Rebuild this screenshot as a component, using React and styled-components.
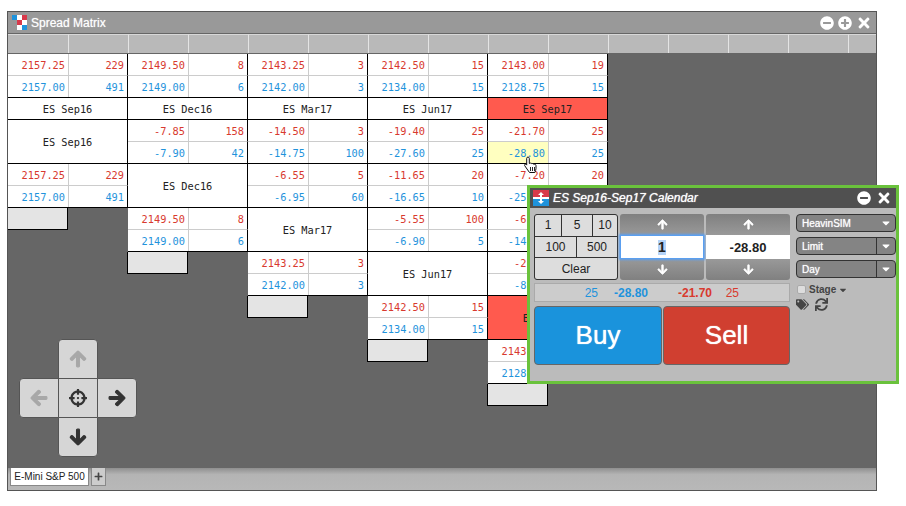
import React from "react";
import styled, { createGlobalStyle } from "styled-components";
import {
  FaArrowUp,
  FaArrowDown,
  FaArrowLeft,
  FaArrowRight,
  FaCrosshairs,
  FaTags,
  FaSync,
  FaMinusCircle,
  FaPlusCircle,
  FaTimes,
  FaPlus,
  FaCaretDown,
} from "react-icons/fa";

const RED = "#d8392e";
const BLUE = "#1f93dc";

const GlobalStyle = createGlobalStyle`
  html, body { margin: 0; padding: 0; background: #fff; }
  body { font-family: "Liberation Sans", Arial, sans-serif; }
  * { box-sizing: border-box; }
`;

const Page = styled.div`
  position: relative;
  width: 906px;
  height: 506px;
  padding: 11px 0 0 7px;
  overflow: hidden;
`;

const Win = styled.div`
  width: 870px;
  height: 480px;
  border: 1px solid #555;
  display: flex;
  flex-direction: column;
`;

const TitleBar = styled.div`
  height: 21px;
  flex: none;
  background: #999;
  display: flex;
  align-items: center;
  padding: 0 4px 0 4px;
  gap: 4px;
`;

const Title = styled.span`
  color: #fff;
  font-size: 12px;
  flex: 1;
  text-shadow: 0 0 1px #ddd;
`;

const WinIcons = styled.span`
  display: flex;
  align-items: center;
  gap: ${(p) => p.$gap || 4}px;
  color: #fff;
  font-size: 14px;
`;

const CloseIcon = styled(FaTimes)`
  font-size: 16px;
`;

const HeaderRow = styled.div`
  height: 21px;
  flex: none;
  display: flex;
  overflow: hidden;
  background: #b9b9b9;
  border-top: 1px solid #666;
  border-bottom: 1px solid #666;
`;

const HeaderCell = styled.div`
  width: 60px;
  flex: none;
  border-top: 1px solid #d8d8d8;
  border-left: 1px solid #e4e4e4;
  &:first-child {
    border-left: none;
  }
`;

const Main = styled.div`
  flex: 1;
  position: relative;
  background: #666;
  display: flex;
  align-items: flex-start;
  overflow: hidden;
`;

const Column = styled.div`
  width: 120px;
  flex: none;
  display: flex;
  flex-direction: column;
  font-family: "DejaVu Sans Mono", "Liberation Mono", monospace;
  font-size: 10.3px;
`;

const Row = styled.div`
  height: 22px;
  display: flex;
  background: #fff;
  border-right: 1px solid #000;
  border-bottom: 1px solid ${(p) => (p.$last ? "#000" : "#ccc")};
`;

const Cell = styled.div`
  width: ${(p) => (p.$qty ? 59 : 60)}px;
  display: flex;
  align-items: center;
  justify-content: flex-end;
  padding-right: 3px;
  color: ${(p) => (p.$side === "bid" ? BLUE : RED)};
  background: ${(p) => (p.$hot ? "#ffffc0" : "transparent")};
  border-left: ${(p) => (p.$qty ? "1px solid #ccc" : "none")};
`;

const Label = styled.div`
  height: ${(p) => (p.$tall ? 44 : 22)}px;
  display: flex;
  align-items: center;
  justify-content: center;
  color: #222;
  background: ${(p) => (p.$active ? "#ff5a4e" : "#fff")};
  border-right: 1px solid #000;
  border-bottom: 1px solid #000;
`;

const Stub = styled.div`
  width: 60px;
  height: 22px;
  background: #e4e4e4;
  border-right: 1px solid #000;
  border-bottom: 1px solid #000;
  box-shadow: -1px 0 0 #000;
`;

const Dpad = styled.div`
  position: absolute;
  left: 11px;
  top: 285px;
  display: grid;
  grid-template-columns: repeat(3, 39px);
  grid-template-rows: repeat(3, 39px);
`;

const PadBtn = styled.div`
  grid-column: ${(p) => p.$col};
  grid-row: ${(p) => p.$row};
  display: flex;
  align-items: center;
  justify-content: center;
  background: #d6d6d6;
  border: 1px solid #555;
  margin: 0 -1px -1px 0;
  border-radius: ${(p) => p.$radius || "0"};
  color: ${(p) => (p.$off ? "#a8a8a8" : "#333")};
  font-size: 18px;
  svg {
    stroke: currentColor;
    stroke-width: ${(p) => (p.$thin ? 0 : 36)};
  }
`;

const TabBar = styled.div`
  height: 22px;
  flex: none;
  background: linear-gradient(#8f8f8f, #b4b4b4 30%, #b8b8b8);
  display: flex;
  align-items: flex-start;
  padding-left: 2px;
  gap: 2px;
`;

const Tab = styled.div`
  height: 18px;
  width: 79px;
  background: #fff;
  border: 1px solid #888;
  border-top: none;
  font-size: 10px;
  color: #222;
  display: flex;
  align-items: center;
  justify-content: center;
  white-space: nowrap;
`;

const AddTab = styled.div`
  width: 15px;
  height: 18px;
  background: #ccc;
  border: 1px solid #888;
  border-top: none;
  color: #444;
  font-size: 9px;
  display: flex;
  align-items: center;
  justify-content: center;
`;

const Pointer = styled.svg`
  position: absolute;
  left: 523px;
  top: 156px;
`;

const Popup = styled.div`
  position: absolute;
  left: 527px;
  top: 185px;
  width: 372px;
  height: 199px;
  border: 3px solid #6ac23c;
  background: #bbb;
  display: flex;
  flex-direction: column;
`;

const PopupTitle = styled.div`
  height: 20px;
  flex: none;
  background: #505050;
  display: flex;
  align-items: center;
  padding: 0 4px 0 3px;
  gap: 4px;
`;

const PopupName = styled.span`
  flex: 1;
  color: #fff;
  font-size: 12px;
  font-style: italic;
  text-shadow: 0 0 1px #eee;
`;

const PopupBody = styled.div`
  padding: 6px 3px 0 4px;
  display: flex;
  gap: 6px;
`;

const TradeArea = styled.div`
  width: 256px;
  flex: none;
  display: flex;
  flex-direction: column;
`;

const TicketRow = styled.div`
  display: flex;
  gap: 2px;
`;

const Keys = styled.div`
  width: 84px;
  height: 66px;
  flex: none;
  display: grid;
  grid-template-columns: 26px 14px 15px 1fr;
  grid-template-rows: repeat(3, 1fr);
  border: 1px solid #333;
  border-radius: 3px;
  overflow: hidden;
  background: #333;
  gap: 1px;
`;

const Key = styled.div`
  grid-column: span ${(p) => p.$span};
  background: #ddd;
  color: #222;
  font-size: 12px;
  display: flex;
  align-items: center;
  justify-content: center;
`;

const Stepper = styled.div`
  width: 84px;
  height: 66px;
  flex: none;
  display: flex;
  flex-direction: column;
`;

const StepBtn = styled.div`
  height: 21px;
  flex: none;
  background: linear-gradient(${(p) => (p.$up ? "#808080, #999" : "#999, #808080")});
  color: #fff;
  font-size: 11px;
  border-radius: ${(p) => (p.$up ? "3px 3px 0 0" : "0 0 3px 3px")};
  display: flex;
  align-items: center;
  justify-content: center;
  svg {
    stroke: currentColor;
    stroke-width: 30;
  }
`;

const Field = styled.div`
  height: 24px;
  flex: none;
  background: #fff;
  color: #222;
  font-size: ${(p) => (p.$focus ? 14 : 13)}px;
  font-weight: bold;
  display: flex;
  align-items: center;
  justify-content: center;
  border: ${(p) => (p.$focus ? "1px solid #5a9ff0" : "none")};
  box-shadow: ${(p) => (p.$focus ? "0 0 2px 1px #5a9ff0" : "none")};
  position: relative;
`;

const Selected = styled.span`
  background: #b4d3f8;
  line-height: 15px;
`;

const QuoteBar = styled.div`
  height: 19px;
  margin-top: 3px;
  background: #ccc;
  border: 1px solid #aaa;
  display: grid;
  grid-template-columns: 63px 50px 64px 27px;
  align-items: center;
  font-size: 12px;
`;

const QuoteText = styled.span`
  color: ${(p) => (p.$side === "bid" ? BLUE : RED)};
  font-weight: ${(p) => (p.$bold ? "bold" : "normal")};
  text-align: right;
`;

const Actions = styled.div`
  margin-top: 4px;
  display: flex;
  gap: 1px;
`;

const Trade = styled.div`
  width: ${(p) => (p.$wide ? 128 : 127)}px;
  height: 59px;
  background: ${(p) => (p.$side === "bid" ? "#1a93dc" : "#d03f30")};
  border: 1px solid #666;
  border-radius: 4px;
  color: #fff;
  font-size: 26px;
  text-shadow: 0 0 1px #fff;
  display: flex;
  align-items: center;
  justify-content: center;
`;

const Side = styled.div`
  width: 100px;
  flex: none;
  display: flex;
  flex-direction: column;
  gap: 5px;
`;

const Select = styled.div`
  height: 18px;
  background: #848484;
  border: 1px solid #333;
  border-radius: 4px;
  color: #fff;
  font-size: 10px;
  text-shadow: 0 0 1px #eee;
  display: flex;
  align-items: center;
  padding-left: 5px;
`;

const SelectText = styled.span`
  flex: 1;
`;

const SelectArrow = styled.span`
  width: 19px;
  align-self: stretch;
  display: flex;
  align-items: center;
  justify-content: center;
  font-size: 12px;
  color: #fff;
  border-left: ${(p) => (p.$split ? "1px solid #333" : "none")};
`;

const StageRow = styled.div`
  display: flex;
  align-items: center;
  gap: 2px;
  font-size: 10px;
  font-weight: bold;
  color: #444;
  padding-left: 1px;
  margin-top: 1px;
`;

const Check = styled.span`
  width: 9px;
  height: 9px;
  margin-right: 1px;
  background: #ddd;
  border: 1px solid #aaa;
  border-radius: 2px;
`;

const ToolRow = styled.div`
  display: flex;
  align-items: center;
  gap: 6px;
  color: #444;
  font-size: 13px;
  margin-top: -2px;
`;

const Q = (ask, askQty, bid, bidQty, hot) => ({ type: "q", ask, askQty, bid, bidQty, hot });
const L = (text, tall, active) => ({ type: "l", text, tall, active });
const S = { type: "s" };

const columns = [
  [Q("2157.25", 229, "2157.00", 491), L("ES Sep16"), L("ES Sep16", true), Q("2157.25", 229, "2157.00", 491), S],
  [Q("2149.50", 8, "2149.00", 6), L("ES Dec16"), Q("-7.85", 158, "-7.90", 42), L("ES Dec16", true), Q("2149.50", 8, "2149.00", 6), S],
  [Q("2143.25", 3, "2142.00", 3), L("ES Mar17"), Q("-14.50", 3, "-14.75", 100), Q("-6.55", 5, "-6.95", 60), L("ES Mar17", true), Q("2143.25", 3, "2142.00", 3), S],
  [Q("2142.50", 15, "2134.00", 15), L("ES Jun17"), Q("-19.40", 25, "-27.60", 25), Q("-11.65", 20, "-16.65", 10), Q("-5.55", 100, "-6.90", 5), L("ES Jun17", true), Q("2142.50", 15, "2134.00", 15), S],
  [Q("2143.00", 19, "2128.75", 15), L("ES Sep17", false, true), Q("-21.70", 25, "-28.80", 25, true), Q("-7.20", 20, "-25.05", 20), Q("-6.00", 10, "-14.25", 10), Q("-2.50", 15, "-8.25", 15), L("ES Sep17", true, true), Q("2143.00", 19, "2128.75", 15), S],
];

const Block = ({ item }) => {
  if (item.type === "s") return <Stub />;
  if (item.type === "l")
    return (
      <Label $tall={item.tall} $active={item.active}>
        {item.text}
      </Label>
    );
  return (
    <>
      <Row>
        <Cell>{item.ask}</Cell>
        <Cell $qty>{item.askQty}</Cell>
      </Row>
      <Row $last>
        <Cell $side="bid" $hot={item.hot}>
          {item.bid}
        </Cell>
        <Cell $side="bid" $qty>
          {item.bidQty}
        </Cell>
      </Row>
    </>
  );
};

const MatrixLogo = () => (
  <svg width="15" height="15" viewBox="0 0 3 3" shapeRendering="crispEdges">
    <rect x="0" y="0" width="1" height="1" fill="#1f93dc" />
    <rect x="1" y="0" width="1" height="1" fill="#fff" />
    <rect x="2" y="0" width="1" height="1" fill="#d8394a" />
    <rect x="1" y="1" width="1" height="1" fill="#d8394a" />
    <rect x="2" y="1" width="1" height="1" fill="#fff" />
    <rect x="1" y="2" width="1" height="1" fill="#fff" />
    <rect x="2" y="2" width="1" height="1" fill="#1f93dc" />
  </svg>
);

const CalendarLogo = () => (
  <svg width="16" height="16" viewBox="0 0 16 16">
    <rect width="16" height="8" fill="#d8394a" />
    <rect y="8" width="16" height="8" fill="#1f93dc" />
    <rect y="7" width="16" height="2" fill="#fff" />
    <path d="M8 2l3 3H9v6h2l-3 3-3-3h2V5H5z" fill="#fff" />
  </svg>
);

export default function App() {
  return (
    <Page>
      <GlobalStyle />
      <Win>
        <TitleBar>
          <MatrixLogo />
          <Title>Spread Matrix</Title>
          <WinIcons>
            <FaMinusCircle />
            <FaPlusCircle />
            <CloseIcon />
          </WinIcons>
        </TitleBar>
        <HeaderRow>
          {Array.from({ length: 15 }, (_, i) => (
            <HeaderCell key={i} />
          ))}
        </HeaderRow>
        <Main>
          {columns.map((col, i) => (
            <Column key={i}>
              {col.map((item, j) => (
                <Block key={j} item={item} />
              ))}
            </Column>
          ))}
          <Dpad>
            <PadBtn $col={2} $row={1} $off $radius="4px 4px 0 0">
              <FaArrowUp />
            </PadBtn>
            <PadBtn $col={1} $row={2} $off $radius="4px 0 0 4px">
              <FaArrowLeft />
            </PadBtn>
            <PadBtn $col={2} $row={2} $thin>
              <FaCrosshairs />
            </PadBtn>
            <PadBtn $col={3} $row={2} $radius="0 4px 4px 0">
              <FaArrowRight />
            </PadBtn>
            <PadBtn $col={2} $row={3} $radius="0 0 4px 4px">
              <FaArrowDown />
            </PadBtn>
          </Dpad>
        </Main>
        <TabBar>
          <Tab>E-Mini S&amp;P 500</Tab>
          <AddTab>
            <FaPlus />
          </AddTab>
        </TabBar>
      </Win>
      <Pointer width="17" height="18" viewBox="0 0 17 18">
        <path
          d="M5 1c.8 0 1.300.6 1.300 1.400V7.500l.5-.2c.9-.4 1.700-.2 2 .4.800-.4 1.600-.1 1.900.6.800-.3 2.300 0 2.300 1.200v3c0 1.500-.7 2.500-1.100 4H6.500L3.300 12 1.600 9.500c-.5-1 .7-1.800 1.500-1.100l.6.700V2.400C3.700 1.600 4.200 1 5 1z"
          fill="#fff"
          stroke="#111"
          strokeWidth="1"
        />
        <path d="M7.500 11v4M9.500 11v4M11.500 11v4" stroke="#111" strokeWidth="0.9" />
      </Pointer>
      <Popup>
        <PopupTitle>
          <CalendarLogo />
          <PopupName>ES Sep16-Sep17 Calendar</PopupName>
          <WinIcons $gap={5}>
            <FaMinusCircle />
            <CloseIcon />
          </WinIcons>
        </PopupTitle>
        <PopupBody>
          <TradeArea>
            <TicketRow>
              <Keys>
                <Key $span={1}>1</Key>
                <Key $span={2}>5</Key>
                <Key $span={1}>10</Key>
                <Key $span={2}>100</Key>
                <Key $span={2}>500</Key>
                <Key $span={4}>Clear</Key>
              </Keys>
              <Stepper>
                <StepBtn $up>
                  <FaArrowUp />
                </StepBtn>
                <Field $focus>
                  <Selected>1</Selected>
                </Field>
                <StepBtn>
                  <FaArrowDown />
                </StepBtn>
              </Stepper>
              <Stepper>
                <StepBtn $up>
                  <FaArrowUp />
                </StepBtn>
                <Field>-28.80</Field>
                <StepBtn>
                  <FaArrowDown />
                </StepBtn>
              </Stepper>
            </TicketRow>
            <QuoteBar>
              <QuoteText $side="bid">25</QuoteText>
              <QuoteText $side="bid" $bold>
                -28.80
              </QuoteText>
              <QuoteText $bold>-21.70</QuoteText>
              <QuoteText>25</QuoteText>
            </QuoteBar>
            <Actions>
              <Trade $side="bid" $wide>
                Buy
              </Trade>
              <Trade>Sell</Trade>
            </Actions>
          </TradeArea>
          <Side>
            <Select>
              <SelectText>HeavinSIM</SelectText>
              <SelectArrow>
                <FaCaretDown />
              </SelectArrow>
            </Select>
            <Select>
              <SelectText>Limit</SelectText>
              <SelectArrow $split>
                <FaCaretDown />
              </SelectArrow>
            </Select>
            <Select>
              <SelectText>Day</SelectText>
              <SelectArrow $split>
                <FaCaretDown />
              </SelectArrow>
            </Select>
            <StageRow>
              <Check />
              Stage
              <FaCaretDown />
            </StageRow>
            <ToolRow>
              <FaTags />
              <FaSync />
            </ToolRow>
          </Side>
        </PopupBody>
      </Popup>
    </Page>
  );
}
